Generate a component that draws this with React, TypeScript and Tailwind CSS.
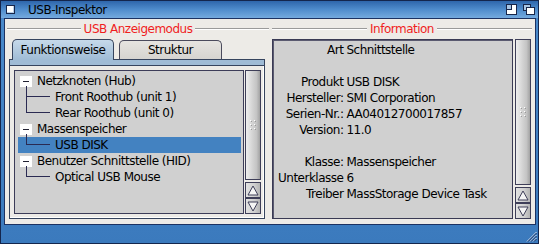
import React from "react";

type Row = { kind: "parent" | "child"; text: string; last?: boolean; selected?: boolean };

const treeRows: Row[] = [
  { kind: "parent", text: "Netzknoten (Hub)" },
  { kind: "child", text: "Front Roothub (unit 1)", last: false },
  { kind: "child", text: "Rear Roothub (unit 0)", last: true },
  { kind: "parent", text: "Massenspeicher" },
  { kind: "child", text: "USB DISK", last: true, selected: true },
  { kind: "parent", text: "Benutzer Schnittstelle (HID)" },
  { kind: "child", text: "Optical USB Mouse", last: true },
];

const infoRows: [string, string][] = [
  ["Art", "Schnittstelle"],
  ["", ""],
  ["Produkt", "USB DISK"],
  ["Hersteller:", "SMI Corporation"],
  ["Serien-Nr.:", "AA04012700017857"],
  ["Version:", "11.0"],
  ["", ""],
  ["Klasse:", "Massenspeicher"],
  ["Unterklasse", "6"],
  ["Treiber", "MassStorage Device Task"],
];

function Dots() {
  return (
    <svg width="6" height="11" viewBox="0 0 6 11">
      {[0, 4, 8].map((y) => (
        <g key={y}>
          <rect x="0" y={y} width="1" height="1" fill="#ffffff" />
          <rect x="1" y={y + 1} width="1" height="1" fill="#9a9a9a" />
          <rect x="4" y={y} width="1" height="1" fill="#ffffff" />
          <rect x="5" y={y + 1} width="1" height="1" fill="#9a9a9a" />
        </g>
      ))}
    </svg>
  );
}

function ArrowBtn({ up }: { up: boolean }) {
  return (
    <div className="h-[16px] border border-[#3e3e58] bg-[linear-gradient(90deg,#e2e2e2,#cfcfcf_60%,#b4b4b4)] flex items-center justify-center">
      <svg width="12" height="11" viewBox="0 0 12 11">
        {up ? (
          <polygon points="6,1 11,10 1,10" fill="#f4f4f4" stroke="#3e3e58" strokeWidth="1" />
        ) : (
          <polygon points="1,1 11,1 6,10" fill="#f4f4f4" stroke="#3e3e58" strokeWidth="1" />
        )}
      </svg>
    </div>
  );
}

function Scrollbar() {
  return (
    <div className="w-[16px] h-full flex flex-col">
      <div className="flex-1 border border-[#3e3e58] bg-[linear-gradient(90deg,#eeeeee,#d4d4d4_45%,#c4c4c4_75%,#a2a2a2)] flex items-center justify-center">
        <Dots />
      </div>
      <div className="h-[2px]" />
      <ArrowBtn up />
      <ArrowBtn up={false} />
    </div>
  );
}

function GroupTitle({ text }: { text: string }) {
  return (
    <div className="h-[12px] flex items-center gap-[3px]">
      <div className="flex-1 border-t border-[#9a9a9a] border-b border-b-white" />
      <span className="text-[#f01e1e] leading-[12px]">{text}</span>
      <div className="flex-1 border-t border-[#9a9a9a] border-b border-b-white" />
    </div>
  );
}

function TreeRow({ row }: { row: Row }) {
  const line = "absolute bg-[#2a2a52]";
  if (row.kind === "parent") {
    return (
      <div className="relative h-[16px] flex items-center">
        <div className="ml-[2px] w-[12px] h-[11px] bg-white flex items-center justify-center">
          <div className="w-[6px] h-px bg-[#222233]" />
        </div>
        <div className={`${line} left-[8px] top-[13px] bottom-0 w-px`} />
        <span className="ml-[5px] whitespace-nowrap">{row.text}</span>
      </div>
    );
  }
  return (
    <div className={`relative h-[16px] flex items-center pl-[37px] ${row.selected ? "bg-[#4382c1]" : ""}`}>
      <div className={`${line} left-[8px] top-0 w-px ${row.last ? "h-[8px]" : "bottom-0"}`} />
      <div className={`${line} left-[8px] top-[7px] w-[24px] h-px`} />
      <span className="whitespace-nowrap">{row.text}</span>
    </div>
  );
}

export default function App() {
  return (
    <div className="w-[539px] h-[244px] relative flex flex-col overflow-hidden border border-[#14264d] bg-[linear-gradient(180deg,#4a8acb,#3b7abd)] font-['DejaVu_Sans',sans-serif] text-[12px] leading-none tracking-[-0.5px] text-black">
      {/* Title bar */}
      <div className="h-[17px] flex items-center bg-[linear-gradient(180deg,#2e66ab,#4f8ccc_50%,#74aade)]">
        <div className="ml-[5px] w-[9px] h-[9px] border border-[#18264a] bg-white shadow-[inset_-1px_-1px_0_#b8cfe6]" />
        <span className="ml-[13px] text-[12px]">USB-Inspektor</span>
        <div className="flex-1" />
        <svg width="11" height="11" viewBox="0 0 11 11" className="mr-[6px]">
          <rect x="0.5" y="0.5" width="10" height="10" fill="#ffffff" stroke="#18264a" />
          <rect x="0.5" y="0.5" width="5" height="5" fill="#a9c6e4" stroke="#18264a" />
        </svg>
        <svg width="12" height="11" viewBox="0 0 12 11" className="mr-[3px]">
          <rect x="0.5" y="0.5" width="7" height="6" fill="#a9c6e4" stroke="#18264a" />
          <rect x="3.5" y="3.5" width="8" height="7" fill="#ffffff" stroke="#18264a" />
        </svg>
      </div>

      {/* Body */}
      <div className="flex-1 ml-[3px] mr-[2px] mb-[18px] border border-[#1c3262] bg-[#edebe7] flex pl-[2px] gap-[3px]">
        {/* Left group */}
        <div className="w-[262px] flex flex-col pt-[4px]">
          <GroupTitle text="USB Anzeigemodus" />
          <div className="mt-[4px] h-[20px] flex items-end pl-[5px] gap-[5px]">
            <div className="relative z-10 -mb-px w-[102px] h-[21px] border border-b-0 border-[#36445e] rounded-t-[5px] bg-[linear-gradient(180deg,#c6d9ea,#9fbbd5)] flex items-center justify-center">
              <span>Funktionsweise</span>
            </div>
            <div className="w-[103px] h-[19px] border border-b-0 border-[#4a4a5c] rounded-t-[5px] bg-[linear-gradient(180deg,#e6e4e0,#d6d4d0)] flex items-center justify-center">
              <span>Struktur</span>
            </div>
          </div>
          <div className="ml-[2px] w-[256px] h-[160px] border border-[#36445e] flex flex-col shadow-[inset_-1px_-1px_0_#ffffff]">
            <div className="h-[6px] bg-[#9fbbd5] border-b border-[#36445e]" />
            <div className="flex gap-[1px] pl-[4px] pt-[4px]">
              <div className="w-[230px] h-[144px] border border-[#3c3c58] bg-[#d0d0d0] pt-[2px] pl-[3px] pr-[2px]">
                {treeRows.map((r, i) => (
                  <TreeRow key={i} row={r} />
                ))}
              </div>
              <div className="h-[144px]">
                <Scrollbar />
              </div>
            </div>
          </div>
        </div>

        {/* Right group */}
        <div className="w-[260px] flex flex-col pt-[4px]">
          <GroupTitle text="Information" />
          <div className="mt-[4px] h-[180px] flex gap-[2px]">
            <div className="w-[241px] h-full border border-[#3a3a54] shadow-[inset_1px_1px_0_#5a5a70] bg-[#d0d0d0] pt-[2px] pl-[5px]">
              <div className="grid grid-cols-[auto_1fr] gap-x-[3px] auto-rows-[16px] items-center">
                {infoRows.map(([k, v], i) => (
                  <React.Fragment key={i}>
                    <span className="text-right whitespace-nowrap">{k}</span>
                    <span className="whitespace-nowrap">{v}</span>
                  </React.Fragment>
                ))}
              </div>
            </div>
            <div className="h-full">
              <Scrollbar />
            </div>
          </div>
        </div>
      </div>

      {/* Resize gadget */}
      <svg width="11" height="11" viewBox="0 0 11 11" className="absolute right-[1px] bottom-[1px]">
        <line x1="10.5" y1="1" x2="1" y2="10.5" stroke="#dfe9f5" />
        <line x1="10.5" y1="4" x2="4" y2="10.5" stroke="#dfe9f5" />
        <line x1="10.5" y1="7" x2="7" y2="10.5" stroke="#dfe9f5" />
        <line x1="10.5" y1="2" x2="2" y2="10.5" stroke="#1c3262" />
        <line x1="10.5" y1="5" x2="5" y2="10.5" stroke="#1c3262" />
        <line x1="10.5" y1="8" x2="8" y2="10.5" stroke="#1c3262" />
      </svg>
    </div>
  );
}
